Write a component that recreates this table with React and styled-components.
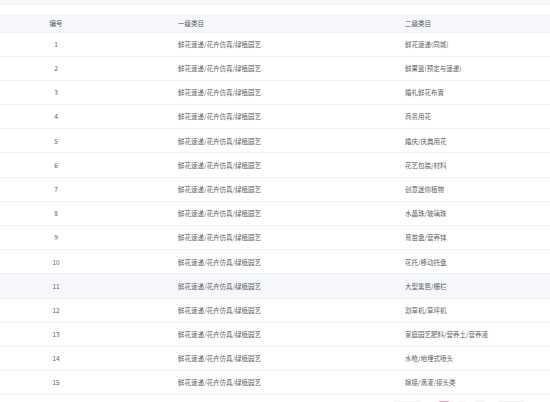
import styled, { createGlobalStyle } from "styled-components";

const GlobalStyle = createGlobalStyle`
  html, body {
    margin: 0;
    padding: 0;
    background: #ffffff;
    overflow: hidden;
  }
  body {
    font-family: "Noto Sans CJK SC", "Noto Sans", sans-serif;
  }
`;

const rows = [
  "鲜花速递(同城)",
  "鲜果篮(预定与速递)",
  "婚礼鲜花布置",
  "商务用花",
  "婚庆/庆典用花",
  "花艺包装/材料",
  "创意迷你植物",
  "水晶珠/玻璃珠",
  "育苗盘/营养钵",
  "花托/移动托盘",
  "大型篱笆/栅栏",
  "割草机/草坪机",
  "家庭园艺肥料/营养土/营养液",
  "水枪/地埋式喷头",
  "嫁接/滴灌/接头类",
];

const Page = styled.div`
  width: 550px;
  height: 402px;
  overflow: hidden;
`;

const TopStrip = styled.div`
  height: 5px;
  background: #f5f6fa;
  margin-bottom: 9px;
`;

const Table = styled.div`
  width: 100%;
`;

const Row = styled.div`
  display: grid;
  grid-template-columns: 112px 227px 1fr;
  align-items: center;
  height: ${(p) => (p.$head ? "18.5px" : "24.2px")};
  box-sizing: border-box;
  background: ${(p) => (p.$head || p.$hover ? "#f5f7fa" : "#ffffff")};
  border-bottom: 1px solid #eef0f4;
  font-size: 6.5px;
  line-height: 1;
  color: ${(p) => (p.$head ? "#55585e" : "#606266")};
`;

const Cell = styled.div`
  text-align: ${(p) => (p.$center ? "center" : "left")};
  padding-left: ${(p) => (p.$center ? "0" : "66px")};
  white-space: nowrap;
`;

const Pager = styled.div`
  display: flex;
  align-items: flex-start;
  gap: 6px;
  padding: 6px 0 0 393px;
`;

const Total = styled.span`
  width: 29px;
  height: 10px;
  background: #f3f4f6;
  border-radius: 2px;
`;

const PageBtn = styled.span`
  width: 12px;
  height: 10px;
  border-radius: 2px;
  background: ${(p) => (p.$active ? "#f7a1bd" : "#f3f4f6")};
  margin-left: ${(p) => (p.$active ? "10px" : "0")};
`;

const SizeBox = styled.span`
  width: 25px;
  height: 10px;
  border: 1px solid #eceef2;
  border-radius: 2px;
  margin-left: 6px;
`;

export default function App() {
  return (
    <Page>
      <GlobalStyle />
      <TopStrip />
      <Table>
        <Row $head>
          <Cell $center>编号</Cell>
          <Cell>一级类目</Cell>
          <Cell>二级类目</Cell>
        </Row>
        {rows.map((name, i) => (
          <Row key={i} $hover={i === 10}>
            <Cell $center>{i + 1}</Cell>
            <Cell>鲜花速递/花卉仿真/绿植园艺</Cell>
            <Cell>{name}</Cell>
          </Row>
        ))}
      </Table>
      <Pager>
        <Total />
        <PageBtn $active />
        <PageBtn />
        <PageBtn />
        <SizeBox />
      </Pager>
    </Page>
  );
}
